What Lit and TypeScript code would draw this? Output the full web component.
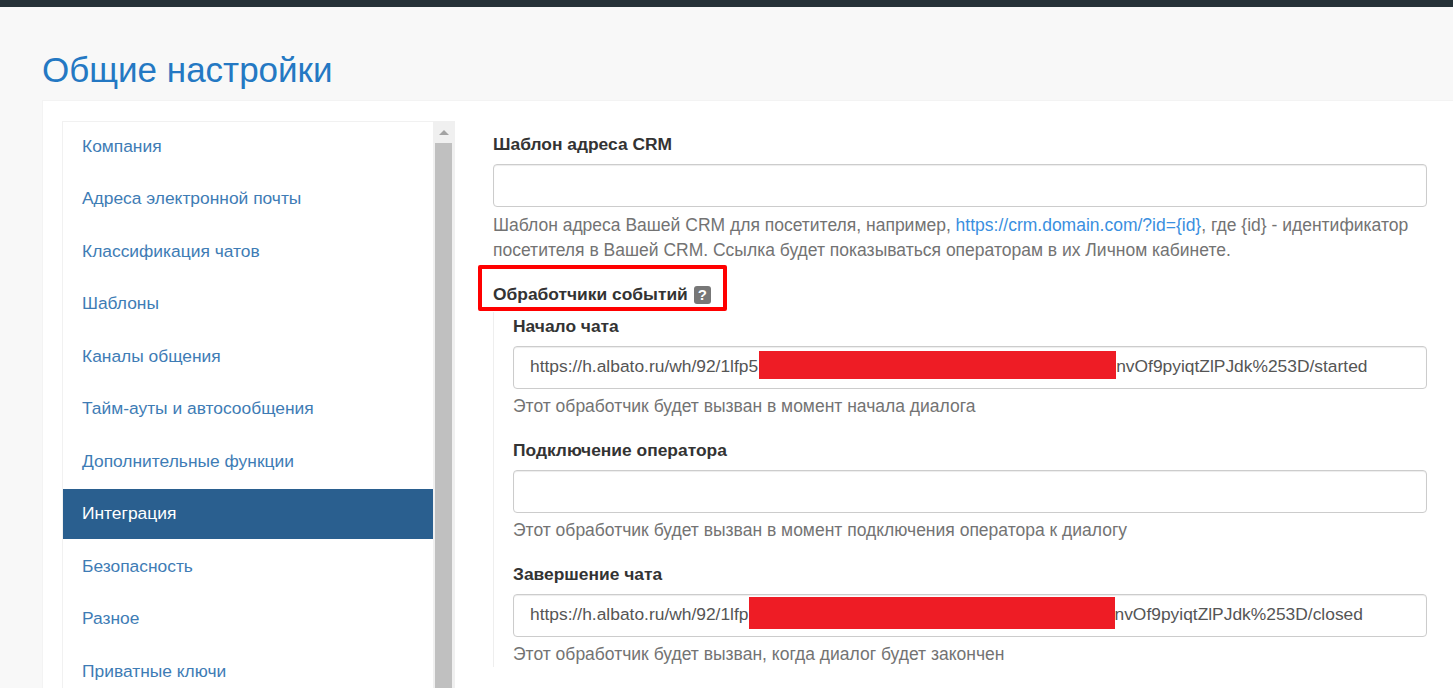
import { LitElement, html, css } from "lit";
import { customElement } from "lit/decorators.js";

const MENU = ["Компания","Адреса электронной почты","Классификация чатов","Шаблоны","Каналы общения","Тайм-ауты и автосообщения","Дополнительные функции","Интеграция","Безопасность","Разное","Приватные ключи"];

@customElement("app-root")
export class AppRoot extends LitElement {
  static styles = css`
    :host { display: block; height: 688px; overflow: hidden; background: #f8f8f8; font-family: "Liberation Sans", Arial, sans-serif; font-size: 17.4px; color: #333; position: relative; }
    * { box-sizing: border-box; }
    .topbar { height: 7px; background: #263238; }
    h1 { margin: 0; padding: 41px 0 0 42px; height: 93px; font-size: 35px; line-height: 44px; font-weight: 400; color: #2478c3; }
    .panel { margin-left: 42px; background: #fff; border: 1px solid #f3f3f3; border-right: 0; padding: 19px 26px 0 19px; display: flex; gap: 38px; height: 600px; }
    .side { width: 393px; flex: none; display: flex; height: 600px; margin-top: 1px; }
    .menu { width: 371px; border: 1px solid #f1f1f1; border-right: 0; border-bottom: 0; flex: none; }
    .item { display: flex; align-items: center; height: 50px; margin-bottom: 2.5px; padding-left: 19px; color: #3e7cb5; }
    .item:first-child { margin-top: -1px; }
    .item.active { background: #2a5f8f; color: #fff; }
    .scroll { width: 22px; background: #f0f0f0; flex: none; padding: 9px 3px 0 2px; }
    .arrow { width: 0; height: 0; border-left: 5px solid transparent; border-right: 5px solid transparent; border-bottom: 5px solid #a3a3a3; margin: 0 auto 8px; }
    .thumb { height: 560px; background: #c0c0c0; }
    .content { flex: 1; min-width: 0; padding-top: 13px; }
    .label { font-weight: 700; line-height: 22px; color: #333; }
    .input { height: 43px; border: 1px solid #ccc; border-radius: 4px; background: #fff; box-shadow: inset 0 1px 1px rgba(0,0,0,.075); margin-top: 9px; padding: 0 16px 2px; display: flex; align-items: center; color: #555; white-space: nowrap; }
    .help { color: #737373; line-height: 25px; margin-top: 6px; font-size: 17.5px; }
    .help a { color: #3a8fe0; text-decoration: none; }
    .hook { margin-top: 20px; display: flex; align-items: center; gap: 6px; }
    .q { width: 17px; height: 18px; border-radius: 3px; background: #777; color: #fff; font-size: 15px; font-weight: 700; display: inline-flex; align-items: center; justify-content: center; margin-top: 1px; }
    .group { border-left: 1px solid #eee; padding-left: 19px; margin-top: 7px; padding-top: 1px; height: 355px; overflow: hidden; }
    .field { height: 124px; padding-top: 2px; }
    .field .help { margin-top: 5px; }
    .bar { flex: none; background: #ee1c25; }
    .bar.b1 { width: 357px; height: 28px; margin: 0 0 3px 1px; }
    .bar.b2 { width: 366px; height: 32px; margin-bottom: 3px; }
    .mark { position: absolute; left: 478px; top: 265px; width: 249px; height: 46px; border: 4px solid #f00; border-radius: 2px; }
  `;

  field(title: string, help: string, value?: unknown) {
    return html`<div class="field">
      <div class="label">${title}</div>
      <div class="input">${value ?? ""}</div>
      <div class="help">${help}</div>
    </div>`;
  }

  render() {
    return html`
      <div class="topbar"></div>
      <h1>Общие настройки</h1>
      <div class="panel">
        <div class="side">
          <div class="menu">
            ${MENU.map((m) => html`<div class="item ${m === "Интеграция" ? "active" : ""}">${m}</div>`)}
          </div>
          <div class="scroll"><div class="arrow"></div><div class="thumb"></div></div>
        </div>
        <div class="content">
          <div class="label">Шаблон адреса CRM</div>
          <div class="input"></div>
          <div class="help">Шаблон адреса Вашей CRM для посетителя, например, <a>https://crm.domain.com/?id={id}</a>, где {id} - идентификатор посетителя в Вашей CRM. Ссылка будет показываться операторам в их Личном кабинете.</div>
          <div class="label hook">Обработчики событий <span class="q">?</span></div>
          <div class="group">
            ${this.field("Начало чата", "Этот обработчик будет вызван в момент начала диалога", html`<span>https://h.albato.ru/wh/92/1lfp5</span><span class="bar b1"></span><span>nvOf9pyiqtZlPJdk%253D/started</span>`)}
            ${this.field("Подключение оператора", "Этот обработчик будет вызван в момент подключения оператора к диалогу")}
            ${this.field("Завершение чата", "Этот обработчик будет вызван, когда диалог будет закончен", html`<span>https://h.albato.ru/wh/92/1lfp</span><span class="bar b2"></span><span>nvOf9pyiqtZlPJdk%253D/closed</span>`)}
          </div>
        </div>
      </div>
      <div class="mark"></div>
    `;
  }
}
